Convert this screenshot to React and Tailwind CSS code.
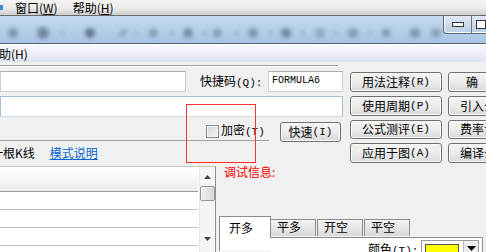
import React from "react";

const btn =
  "h-[20px] flex items-center justify-center rounded-[3px] border border-[#707070] bg-linear-to-b from-[#f4f4f4] via-[#ececec] to-[#d9d9d9] shadow-[inset_0_0_0_1px_#fbfbfb] text-[12px] leading-[14px] whitespace-nowrap";

const blobs = [
  [13, 5, 0.45], [43, 6, 0.55], [62, 2, 0.3], [90, 5, 0.7], [123, 3, 0.25],
  [136, 2, 0.3], [153, 4, 0.45], [172, 2, 0.3], [188, 5, 0.5], [205, 2, 0.3],
  [217, 4, 0.45], [237, 2, 0.3], [253, 5, 0.45], [271, 2, 0.3], [286, 5, 0.55],
  [303, 2, 0.3], [320, 5, 0.3], [336, 2, 0.3], [353, 5, 0.4], [370, 2, 0.3],
  [386, 4, 0.45], [415, 5, 0.45], [436, 5, 0.35],
];

// narrow ascii part, like the bitmap font of old dialogs
const A = ({ children }) => (
  <span className="font-['Liberation_Mono',monospace] text-[11px]">{children}</span>
);

const Tab = ({ label, active }) => (
  <div
    className={
      "flex items-start pl-[6px] border border-[#898c95] border-b-0 " +
      (active
        ? "w-[52px] h-[35px] bg-white pt-[4px] pl-[9px]"
        : "w-[46px] h-[17px] mt-[3px] bg-linear-to-b from-[#f4f4f4] to-[#d9d9d9] -ml-px")
    }
  >
    {label}
  </div>
);

export default function App() {
  return (
    <div className="relative w-[486px] h-[252px] overflow-hidden bg-[#f0f0f0] text-[12px] leading-[14px] text-black font-['Noto_Sans_CJK_SC',sans-serif]">
      {/* menu bar */}
      <div className="h-[16px] flex items-center border-b border-[#6a6a6a] bg-linear-to-b from-[#f6f6f6] via-[#ececec] to-[#cfcfcf]">
        <div className="w-[3px] h-[5px] bg-[#3b8ad9]" />
        <span className="ml-[12px]">窗口(<u>W</u>)</span>
        <span className="ml-[15px]">帮助(<u>H</u>)</span>
      </div>

      {/* toolbar */}
      <div className="relative h-[28px] border-b border-[#56657a] bg-linear-to-b from-[#c4daef] via-[#b5cfe9] to-[#a8c5e3]">
        <svg width="444" height="27" className="block">
          <defs>
            <filter id="b" x="-50%" y="-50%" width="200%" height="200%">
              <feGaussianBlur stdDeviation="2" />
            </filter>
          </defs>
          {blobs.map(([x, r, o], i) => (
            <circle key={i} cx={x} cy={17} r={r} fill="#3e4f63" opacity={o} filter="url(#b)" />
          ))}
          <line x1="118" y1="21" x2="128" y2="12" stroke="#5a6a7c" strokeWidth="2" opacity="0.35" filter="url(#b)" />
        </svg>
        <div className="absolute right-0 top-0 w-[43px] h-[18px] flex border-l border-b border-[#5c6470] rounded-bl-[4px] bg-linear-to-b from-[#dfe9f4] to-[#b9cde3] shadow-[inset_1px_-1px_0_#ffffff]">
          <div className="w-[28px] h-full flex items-center justify-center border-r border-[#6a7480]">
            <div className="w-[12px] h-[5px] border border-[#333] bg-white" />
          </div>
          <div className="flex-1 flex items-center pl-[4px]">
            <div className="w-[10px] h-[9px] border border-[#333] bg-white" />
          </div>
        </div>
      </div>

      {/* second menu bar */}
      <div className="h-[18px] flex items-end pb-[1px] bg-linear-to-b from-[#fcfcfc] via-[#eef0f7] to-[#dde2f0]">
        <span className="-ml-[1px]">助(H)</span>
      </div>

      {/* top part of dialog */}
      <div className="flex h-[101px]">
        <div className="w-[343px] shrink-0 flex flex-col">
          <div className="mt-[3px] w-[338px] h-[2px] border-t border-[#a0a0a0] border-b border-b-white" />
          <div className="mt-[4px] h-[21px] flex items-center">
            <div className="w-[186px] h-full bg-white border border-[#c9ccd2] border-t-[#abadb3]" />
            <span className="ml-[14px]">
              快捷码<A>(Q):</A>
            </span>
            <div className="ml-auto w-[75px] h-full bg-white border border-[#c9ccd2] border-t-[#abadb3] pl-[3px] pt-[3px] font-['Liberation_Mono',monospace] text-[10px] leading-[12px]">
              FORMULA6
            </div>
          </div>
          <div className="mt-[4px] h-[21px] bg-white border border-[#a7bdd4] border-b-[#cbd9e8]" />
          <div className="mt-[5px] flex items-start">
            <div className="w-[269px] h-[19px] flex items-center border-b border-[#a0a0a0]">
              <div className="ml-[206px] w-[13px] h-[13px] border border-[#8e8f8f] bg-linear-to-br from-[#d4d4d4] to-[#f7f7f7] shadow-[inset_0_0_0_1px_#f4f4f4]" />
              <span className="ml-[2px]">
                加密<A>(T)</A>
              </span>
            </div>
            <div className={btn + " ml-[11px] w-[61px]"}>
              快速<A>(I)</A>
            </div>
          </div>
          <div className="mt-[4px] flex items-center h-[14px]">
            <span className="-ml-[9px]">一根K线</span>
            <span className="ml-[15px] text-[#0066cc] underline">模式说明</span>
          </div>
        </div>

        <div className="ml-[7px] w-[92px] shrink-0 pt-[10px] flex flex-col gap-[4px]">
          <div className={btn}>用法注释<A>(R)</A></div>
          <div className={btn}>使用周期<A>(P)</A></div>
          <div className={btn}>公式测评<A>(E)</A></div>
          <div className={btn}>应用于图<A>(A)</A></div>
        </div>

        <div className="ml-[6px] w-[92px] shrink-0 pt-[10px] flex flex-col gap-[4px]">
          <div className={btn + " border-[#3c7fb1] shadow-[inset_0_0_0_1px_#bfe0f6]"}>确　定<A>(O)</A></div>
          <div className={btn}>引入公式<A>(M)</A></div>
          <div className={btn}>费率设置<A>(S)</A></div>
          <div className={btn}>编译公式<A>(C)</A></div>
        </div>
      </div>

      {/* bottom part of dialog */}
      <div className="flex">
        <div className="mt-[3px] w-[216px] shrink-0 h-[86px] flex bg-white border-t border-r border-[#8c8f95] border-t-[#c8c8c8]">
          <div className="w-[198px] flex flex-col">
            <div className="mt-[2px] h-[23px] border-b border-[#9a9a9a] bg-linear-to-b from-[#ffffff] via-[#f4f5f6] to-[#e9eaeb]" />
            <div className="h-[18px] border-b border-[#c0c0c0]" />
            <div className="h-[18px] border-b border-[#c0c0c0]" />
            <div className="h-[18px] border-b border-[#c0c0c0]" />
          </div>
          <div className="ml-[1px] w-[16px] flex flex-col items-center bg-[#f4f4f4] border-l border-[#e8e8e8]">
            <svg width="7" height="4" className="mt-[8px]">
              <path d="M0 4 L3.5 0 L7 4 Z" fill="#444" />
            </svg>
            <div className="mt-[7px] w-[15px] h-[15px] rounded-[2px] border border-[#979797] bg-linear-to-r from-[#f0f0f0] to-[#d8d8d8]" />
            <svg width="7" height="4" className="mt-[36px]">
              <path d="M0 0 L3.5 4 L7 0 Z" fill="#444" />
            </svg>
          </div>
        </div>

        <div className="flex-1 flex flex-col">
          <div className="ml-[8px] mt-[2px] text-[#ff0000]">调试信息:</div>
          <div className="mt-[37px] ml-[3px] flex items-start">
            <Tab label="开多" active />
            <Tab label="平多" />
            <div className="ml-[2px]">
              <Tab label="开空" />
            </div>
            <div className="ml-[2px]">
              <Tab label="平空" />
            </div>
          </div>
        </div>
      </div>

      {/* tab panel top border and content */}
      <div className="absolute left-[270px] top-[237px] w-[213px] h-[15px] bg-white border-t border-r border-[#898c95] flex items-start">
        <span className="ml-[98px] mt-[4px]">
          颜色<A>(T):</A>
        </span>
        <div className="ml-[3px] mt-[2px] w-[58px] h-[14px] flex border border-[#9a9a9a] border-b-0 bg-white">
          <div className="ml-[3px] mt-[3px] w-[34px] h-[10px] bg-[#ffff00] border border-[#555] border-b-0" />
          <div className="ml-[4px] w-[15px] flex items-start justify-center pt-[5px] bg-[#ececec] border-l border-[#bbb]">
            <svg width="9" height="5">
              <path d="M0 0 L4.5 5 L9 0 Z" fill="#000" />
            </svg>
          </div>
        </div>
      </div>

      {/* red annotation box */}
      <div className="absolute left-[186px] top-[104px] w-[70px] h-[59px] border border-[#ff3030]" />
    </div>
  );
}
